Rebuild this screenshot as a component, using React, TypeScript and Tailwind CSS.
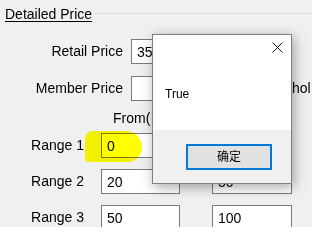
import React from "react";

function Box({ w, value }: { w: string; value?: string }) {
  return (
    <div className={`${w} h-[25px] shrink-0 border border-[#7a7a7a] bg-white flex items-center pl-[5px] leading-none`}>
      {value}
    </div>
  );
}

export default function App() {
  return (
    <div className="relative w-[312px] h-[227px] overflow-hidden bg-[#f0f0f0] text-[14px] text-black font-['Liberation_Sans','Noto_Sans_CJK_SC',sans-serif]">
      {/* group header */}
      <div className="flex items-start pt-[4px] pl-[5px] h-[24px]">
        <span className="leading-[20px] underline underline-offset-[2px] whitespace-nowrap">Detailed Price</span>
        <div className="flex-1 ml-[3px] mt-[9px] border-t border-[#dcdcdc]" />
      </div>

      {/* Retail Price */}
      <div className="flex items-center mt-[15px]">
        <div className="w-[123px] shrink-0 text-right whitespace-nowrap">Retail Price</div>
        <div className="ml-[8px] shrink-0">
          <Box w="w-[110px]" value="35" />
        </div>
      </div>

      {/* Member Price */}
      <div className="flex items-center mt-[12px] whitespace-nowrap">
        <div className="w-[123px] shrink-0 text-right">Member Price</div>
        <div className="ml-[8px] shrink-0">
          <Box w="w-[110px]" />
        </div>
        <span className="ml-[51px] shrink-0">hol</span>
      </div>

      {/* header */}
      <div className="flex mt-[7px] h-[20px] leading-[20px]">
        <span className="ml-[113px] whitespace-nowrap">From(</span>
      </div>

      {/* Ranges */}
      <div className="flex items-center mt-[5px]">
        <div className="w-[84px] shrink-0 text-right whitespace-nowrap">Range 1</div>
        <div className="ml-[17px] shrink-0"><Box w="w-[79px]" value="0" /></div>
        <div className="ml-[32px] shrink-0"><Box w="w-[80px]" /></div>
      </div>
      <div className="flex items-center mt-[11px]">
        <div className="w-[84px] shrink-0 text-right whitespace-nowrap">Range 2</div>
        <div className="ml-[17px] shrink-0"><Box w="w-[79px]" value="20" /></div>
        <div className="ml-[32px] shrink-0"><Box w="w-[80px]" value="50" /></div>
      </div>
      <div className="flex items-center mt-[11px]">
        <div className="w-[84px] shrink-0 text-right whitespace-nowrap">Range 3</div>
        <div className="ml-[17px] shrink-0"><Box w="w-[79px]" value="50" /></div>
        <div className="ml-[32px] shrink-0"><Box w="w-[80px]" value="100" /></div>
      </div>

      {/* yellow marker highlight */}
      <div className="absolute left-[85px] top-[131px] w-[57px] h-[31px] bg-[#ffff00] mix-blend-multiply rounded-[12px_24px_22px_6px]" />

      {/* message box */}
      <div className="absolute left-[152px] top-[34px] w-[140px] h-[150px] border border-[#7f7f7f] bg-white shadow-[2px_3px_12px_rgba(0,0,0,0.35)] flex flex-col">
        <div className="flex-1 flex flex-col">
          <div className="flex justify-end pt-[7px] pr-[8px]">
            <svg width="11" height="11" viewBox="0 0 11 11">
              <path d="M0.5 0.5 L10.5 10.5 M10.5 0.5 L0.5 10.5" stroke="#1a1a1a" strokeWidth="1" fill="none" />
            </svg>
          </div>
          <div className="mt-[33px] pl-[12px] text-[12px] leading-[16px]">True</div>
        </div>
        <div className="h-[53px] bg-[#f0f0f0] pl-[33px] pt-[14px]">
          <div className="w-[86px] h-[26px] border-2 border-[#0078d7] bg-[#e1e1e1] flex items-center justify-center text-[12px] leading-none">
            确定
          </div>
        </div>
      </div>
    </div>
  );
}
